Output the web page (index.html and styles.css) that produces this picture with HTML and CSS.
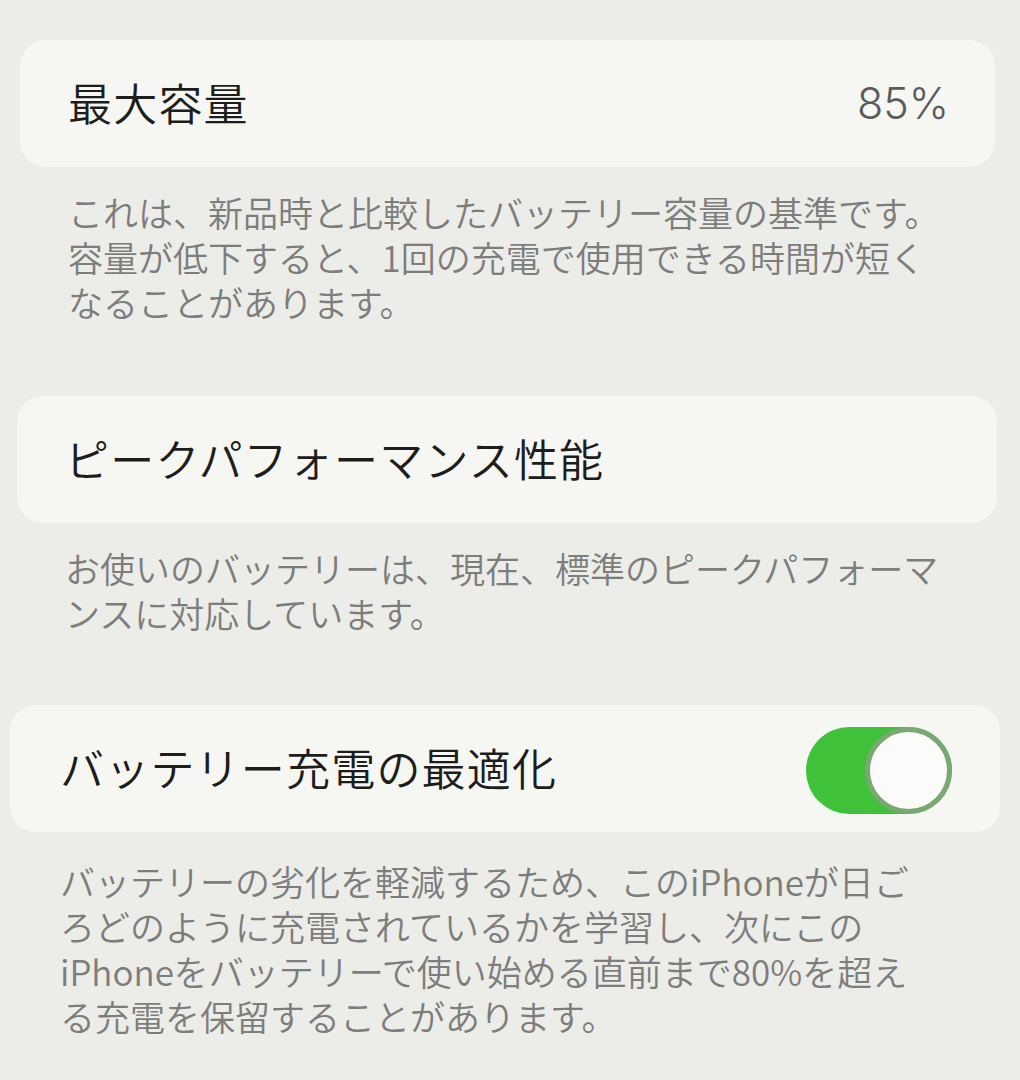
FILE: index.html
```html
<!DOCTYPE html>
<html lang="ja">
<head>
<meta charset="utf-8">
<title>バッテリーの状態</title>
<link rel="stylesheet" href="styles.css">
</head>
<body>
<main class="page">
  <section class="group group-1">
    <div class="card">
      <span class="title">最大容量</span>
      <span class="value">85%</span>
    </div>
    <p class="note">これは、新品時と比較したバッテリー容量の基準です。<br>容量が低下すると、1回の充電で使用できる時間が短く<br>なることがあります。</p>
  </section>
  <section class="group group-2">
    <div class="card">
      <span class="title">ピークパフォーマンス性能</span>
    </div>
    <p class="note">お使いのバッテリーは、現在、標準のピークパフォーマ<br>ンスに対応しています。</p>
  </section>
  <section class="group group-3">
    <div class="card">
      <span class="title">バッテリー充電の最適化</span>
      <span class="toggle"><span class="knob"></span></span>
    </div>
    <p class="note">バッテリーの劣化を軽減するため、このiPhoneが日ご<br>ろどのように充電されているかを学習し、次にこの<br>iPhoneをバッテリーで使い始める直前まで80%を超え<br>る充電を保留することがあります。</p>
  </section>
</main>
</body>
</html>
```

FILE: styles.css
```css
html, body {
  margin: 0;
  padding: 0;
}
body {
  background: #ecece9;
  font-family: "Noto Sans CJK JP", "Noto Sans", sans-serif;
  width: 1020px;
  height: 1080px;
  overflow: hidden;
}
.page {
  padding-top: 40px;
  display: flex;
  flex-direction: column;
}
.group {
  display: flex;
  flex-direction: column;
}
.group-1 { margin: 0 25px 0 20px; }
.group-2 { margin: 72px 23px 0 17px; }
.group-3 { margin: 70px 20px 0 10px; }
.card {
  height: 127px;
  background: #f6f6f3;
  border-radius: 26px;
  display: flex;
  align-items: center;
  justify-content: space-between;
  padding: 0 46px 0 48px;
  box-sizing: border-box;
}
.group-3 .card { padding: 0 48px 0 50px; }
.title {
  font-size: 44px;
  font-weight: 350;
  color: #1d1d1b;
  letter-spacing: 1.2px;
  line-height: 1;
  padding-bottom: 4px;
}
.value {
  font-family: "Inter", "Noto Sans", sans-serif;
  font-size: 43px;
  font-weight: 300;
  color: #5b5b59;
  padding-bottom: 2px;
}
.note {
  margin: 22px 0 0 48px;
  font-size: 35px;
  line-height: 45px;
  color: #7d7d7b;
  white-space: nowrap;
  font-weight: 350;
}
.group-3 .note { margin: 26px 0 0 50px; }
.toggle {
  position: relative;
  width: 146px;
  height: 87px;
  border-radius: 44px;
  background: #3fc23a;
  margin-top: 4px;
}
.knob {
  position: absolute;
  right: 0;
  top: 0;
  width: 87px;
  height: 87px;
  box-sizing: border-box;
  border-radius: 50%;
  background: #fbfbf9;
  border: 5px solid #79a873;
}
```
